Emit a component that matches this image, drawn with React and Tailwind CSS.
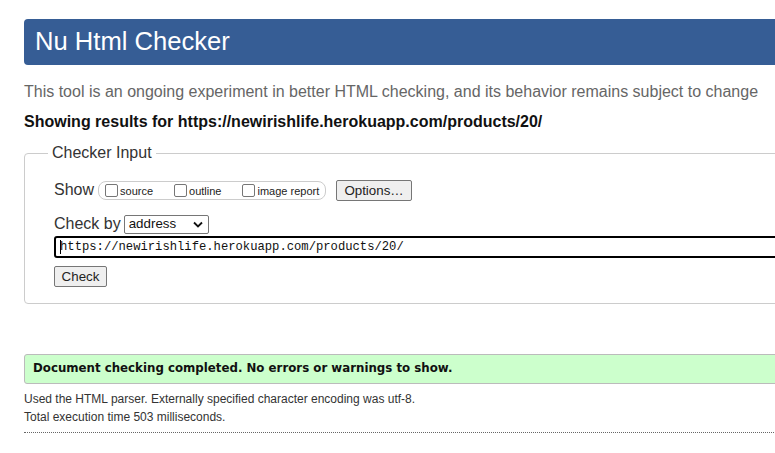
import React from 'react';

const Box = ({ label }) => (
    <span className="inline-flex items-center">
        <span className="inline-block w-[13px] h-[13px] border border-[#767676] rounded-[2px] bg-white mr-[2px]" />
        <span className="text-[11px] text-[#222] leading-none mt-[3px]">{label}</span>
    </span>
);

const App = () => {
    return (
        <div className="w-[775px] h-[453px] overflow-hidden bg-white font-['Liberation_Sans',Arial,sans-serif]">
            <div className="w-[1000px] pl-[24px] pt-[19px]">
                {/* Header */}
                <div className="h-[46px] bg-[#365d95] rounded-[4px] flex items-center pl-[11px]">
                    <h1 className="text-white text-[25.6px] leading-none">Nu Html Checker</h1>
                </div>

                <p className="mt-[18px] text-[16px] leading-[18px] text-[#666]">
                    This tool is an ongoing experiment in better HTML checking, and its behavior remains subject to change
                </p>
                <p className="mt-[12px] text-[16px] leading-[18px] font-bold text-[#111]">
                    Showing results for https://newirishlife.herokuapp.com/products/20/
                </p>

                {/* Checker input */}
                <fieldset className="mt-[13px] border border-[#ccc] rounded-[4px] h-[160px] pl-[29px] pr-4">
                    <legend className="-ml-[6px] px-[4px] text-[16px] leading-[18px] text-[#333]">Checker Input</legend>

                    <div className="flex items-center mt-[17px] h-[22px]">
                        <span className="text-[16px] text-[#333]">Show</span>
                        <div className="ml-[4px] h-[19px] w-[228px] border border-[#ccc] rounded-[8px] flex items-center pl-[6px] gap-[21px]">
                            <Box label="source" />
                            <Box label="outline" />
                            <Box label="image report" />
                        </div>
                        <button className="ml-[10px] h-[21px] w-[76px] border border-[#767676] rounded-[2px] bg-[#efefef] text-[13.33px] text-[#222]">
                            Options…
                        </button>
                    </div>

                    <div className="flex items-center mt-[13px] h-[20px]">
                        <span className="text-[16px] text-[#333]">Check by</span>
                        <div className="ml-[3px] h-[19px] w-[85px] border border-[#767676] rounded-[2px] bg-white flex items-center justify-between pl-[4px] pr-[5px]">
                            <span className="text-[13.33px] text-[#111]">address</span>
                            <svg width="10" height="7" viewBox="0 0 10 7" fill="none">
                                <path d="M1 1.5 L5 5.5 L9 1.5" stroke="#111" strokeWidth="1.8" />
                            </svg>
                        </div>
                    </div>

                    <div className="mt-[2px] h-[22px] border-2 border-black rounded-[3px] flex items-center pl-[4px]">
                        <span className="w-[1px] h-[14px] bg-black" />
                        <span className="font-['Liberation_Mono',monospace] text-[12.2px] text-[#111] -ml-[1px]">
                            https://newirishlife.herokuapp.com/products/20/
                        </span>
                    </div>

                    <button className="mt-[8px] h-[21px] w-[53px] border border-[#767676] rounded-[2px] bg-[#efefef] text-[13.33px] text-[#222] block">
                        Check
                    </button>
                </fieldset>

                {/* Result */}
                <div className="mt-[50px] h-[30px] bg-[#ccffcc] border border-[#bbb] rounded-[3px] flex items-center pl-[8px]">
                    <span className="font-['DejaVu_Sans',Verdana,sans-serif] font-bold text-[11.8px] text-[#111]">
                        Document checking completed. No errors or warnings to show.
                    </span>
                </div>

                <p className="mt-[6px] text-[12px] leading-[18px] text-[#333]">
                    Used the HTML parser. Externally specified character encoding was utf-8.
                </p>
                <p className="text-[12px] leading-[18px] text-[#333]">Total execution time 503 milliseconds.</p>
                <div className="mt-[6px] border-t border-dotted border-[#666]" />
            </div>
        </div>
    );
};

export default App;
